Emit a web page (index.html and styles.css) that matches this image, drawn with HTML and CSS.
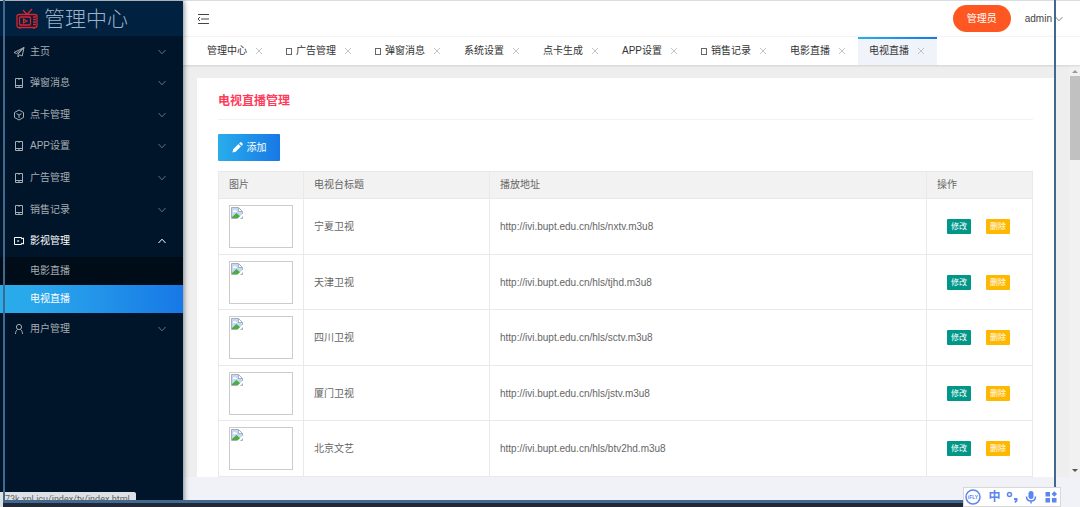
FILE: index.html
```html
<!DOCTYPE html>
<html lang="zh-CN">
<head>
<meta charset="utf-8">
<title>管理中心</title>
<link rel="stylesheet" href="styles.css">
</head>
<body>
<svg class="defs" aria-hidden="true">
  <symbol id="down" viewBox="0 0 10 10"><path d="M1.500 3 5 6.800 8.500 3"/></symbol>
  <symbol id="up" viewBox="0 0 10 10"><path d="M1.500 7 5 3.200 8.500 7"/></symbol>
  <symbol id="cross" viewBox="0 0 8 8"><path d="M1 1 7 7M7 1 1 7"/></symbol>
  <symbol id="phone" viewBox="0 0 12 12"><path d="M2.500 1.500h7v9h-7zM2.500 8.500h7M5 10h2M5 2h2"/></symbol>
  <symbol id="plane" viewBox="0 0 12 12"><path d="M11 1.500 1 6.500l2.600 1L11 1.500 5 8v3l1.600-2.200L9.200 10z"/></symbol>
  <symbol id="cube" viewBox="0 0 12 12"><path d="M6 1 10.500 3.500v5L6 11 1.500 8.500v-5zM3.500 4.700 6 6l2.500-1.300M6 6v3"/></symbol>
  <symbol id="video" viewBox="0 0 12 12"><path d="M1.500 2.500h7v1.300l2-.8v6l-2-.8v1.300h-7z"/><path d="M4.500 4.800v2.400L6.500 6z" fill="currentColor" stroke="none"/></symbol>
  <symbol id="user" viewBox="0 0 12 12"><circle cx="6" cy="4" r="2.600"/><path d="M4.700 6.300C3.200 7.300 2.500 9 2.500 11M7.300 6.300c1.500 1 2.200 2.700 2.200 4.700"/></symbol>
  <symbol id="broken" viewBox="0 0 14 14">
    <path d="M1.500 1.500h7l4 4v7h-11z" fill="#c3d9f7" stroke="#a9afb8"/>
    <path d="M8.500 1.500v4h4z" fill="#fff" stroke="#a9afb8"/>
    <path d="M3 6a1.500 1.500 0 0 1 2.500-1.500A1.300 1.300 0 0 1 7 6z" fill="#fff" stroke="none"/>
    <path d="M2 12v-1l4.500-4L11 11v1z" fill="#4caf3c" stroke="none"/>
    <path d="M6 14 14 6.500v2.500L9 14z" fill="#fff" stroke="none"/>
  </symbol>
</svg>
<div class="app">
  <aside class="sidebar">
    <div class="logo">
      <svg class="logo-icon" viewBox="0 0 22 22"><path d="M7 2l4 4.500L16 1M3 6.500h16q2 0 2 2v9q0 2-2 2H3q-2 0-2-2v-9q0-2 2-2zM4.500 9h9q1 0 1 1v6q0 1-1 1h-9q-1 0-1-1v-6q0-1 1-1zM17 9h3M17 11.500h3M17 14h3M17 16.500h3M4 19.500v1.500M18 19.500v1.500M7.500 11v4l3.500-2z"/></svg>
      <span>管理中心</span>
    </div>
    <nav>
      <div class="menu">
        <button class="item"><svg><use href="#plane"/></svg><span>主页</span><svg class="arrow"><use href="#down"/></svg></button>
        <button class="item"><svg><use href="#phone"/></svg><span>弹窗消息</span><svg class="arrow"><use href="#down"/></svg></button>
        <button class="item"><svg><use href="#cube"/></svg><span>点卡管理</span><svg class="arrow"><use href="#down"/></svg></button>
        <button class="item"><svg><use href="#phone"/></svg><span>APP设置</span><svg class="arrow"><use href="#down"/></svg></button>
        <button class="item"><svg><use href="#phone"/></svg><span>广告管理</span><svg class="arrow"><use href="#down"/></svg></button>
        <button class="item"><svg><use href="#phone"/></svg><span>销售记录</span><svg class="arrow"><use href="#down"/></svg></button>
        <button class="item open"><svg><use href="#video"/></svg><span>影视管理</span><svg class="arrow"><use href="#up"/></svg></button>
      </div>
      <div class="submenu">
        <a href="#">电影直播</a>
        <a href="#" class="current">电视直播</a>
      </div>
      <button class="item"><svg><use href="#user"/></svg><span>用户管理</span><svg class="arrow"><use href="#down"/></svg></button>
    </nav>
  </aside>
  <main class="main">
    <header class="topbar">
      <button class="fold" aria-label="折叠菜单"><svg viewBox="0 0 12 12"><path d="M1 1.500h11M4 6h8M1 10.500h11M3 4 1 6l2 2"/></svg></button>
      <div class="account">
        <button class="role">管理员</button>
        <button class="name">admin<svg><use href="#down"/></svg></button>
      </div>
    </header>
    <div class="tabs">
      <div class="tab"><a href="#">管理中心</a><button aria-label="关闭"><svg><use href="#cross"/></svg></button></div>
      <div class="tab"><i class="glyph"></i><a href="#">广告管理</a><button aria-label="关闭"><svg><use href="#cross"/></svg></button></div>
      <div class="tab"><i class="glyph"></i><a href="#">弹窗消息</a><button aria-label="关闭"><svg><use href="#cross"/></svg></button></div>
      <div class="tab"><a href="#">系统设置</a><button aria-label="关闭"><svg><use href="#cross"/></svg></button></div>
      <div class="tab"><a href="#">点卡生成</a><button aria-label="关闭"><svg><use href="#cross"/></svg></button></div>
      <div class="tab"><a href="#">APP设置</a><button aria-label="关闭"><svg><use href="#cross"/></svg></button></div>
      <div class="tab"><i class="glyph"></i><a href="#">销售记录</a><button aria-label="关闭"><svg><use href="#cross"/></svg></button></div>
      <div class="tab"><a href="#">电影直播</a><button aria-label="关闭"><svg><use href="#cross"/></svg></button></div>
      <div class="tab active"><a href="#">电视直播</a><button aria-label="关闭"><svg><use href="#cross"/></svg></button></div>
    </div>
    <div class="body">
      <div class="view">
        <section class="card">
          <h1>电视直播管理</h1>
          <button class="add"><svg viewBox="0 0 12 12"><path d="M.5 11.500 1.300 8 7 2.300 9.700 5 4 10.700zM7.800 1.500 9 .4q.6-.5 1.200 0l1.400 1.400q.5.6 0 1.200L10.500 4.200z"/></svg>添加</button>
          <table>
            <colgroup><col class="c-pic"><col class="c-title"><col><col class="c-act"></colgroup>
            <thead><tr><th>图片</th><th>电视台标题</th><th>播放地址</th><th>操作</th></tr></thead>
            <tbody>
              <tr><td><div class="thumb"><svg><use href="#broken"/></svg></div></td><td>宁夏卫视</td><td>http://ivi.bupt.edu.cn/hls/nxtv.m3u8</td><td><div class="acts"><button class="edit">修改</button><button class="del">删除</button></div></td></tr>
              <tr><td><div class="thumb"><svg><use href="#broken"/></svg></div></td><td>天津卫视</td><td>http://ivi.bupt.edu.cn/hls/tjhd.m3u8</td><td><div class="acts"><button class="edit">修改</button><button class="del">删除</button></div></td></tr>
              <tr><td><div class="thumb"><svg><use href="#broken"/></svg></div></td><td>四川卫视</td><td>http://ivi.bupt.edu.cn/hls/sctv.m3u8</td><td><div class="acts"><button class="edit">修改</button><button class="del">删除</button></div></td></tr>
              <tr><td><div class="thumb"><svg><use href="#broken"/></svg></div></td><td>厦门卫视</td><td>http://ivi.bupt.edu.cn/hls/jstv.m3u8</td><td><div class="acts"><button class="edit">修改</button><button class="del">删除</button></div></td></tr>
              <tr><td><div class="thumb"><svg><use href="#broken"/></svg></div></td><td>北京文艺</td><td>http://ivi.bupt.edu.cn/hls/btv2hd.m3u8</td><td><div class="acts"><button class="edit">修改</button><button class="del">删除</button></div></td></tr>
            </tbody>
          </table>
        </section>
      </div>
      <div class="scroll" aria-hidden="true"><i class="tri up"></i><i class="bar"></i><i class="tri down"></i></div>
    </div>
    <footer class="foot"></footer>
  </main>
</div>
<div class="status">73k.xpl.icu/index/tv/index.html</div>
<div class="taskbar"></div>
<div class="frame"></div>
<div class="ime">
  <svg viewBox="0 0 16 16"><circle cx="8" cy="8" r="7"/><text x="8" y="10" text-anchor="middle" class="brand">iFLY</text></svg>
  <span>中</span>
  <svg viewBox="0 0 16 16"><circle cx="5.500" cy="5.500" r="2"/><path d="M10 10h2.500v1.500L11 13.500" class="thick"/></svg>
  <svg viewBox="0 0 16 16"><rect x="5.500" y="2" width="5" height="8" rx="2.500" class="fill"/><path d="M3.500 7.500q0 4.500 4.500 4.500t4.500-4.500M8 12v2.500"/></svg>
  <svg viewBox="0 0 16 16"><path class="fill" d="M2.500 3h4.500v4.500H2.500zM2.500 9h4.500v4.500H2.500zM9 9h4.500v4.500H9zM11.300 2.300 14 5l-2.700 2.700L8.600 5z"/></svg>
</div>
</body>
</html>
```
FILE: styles.css
```css
* { box-sizing: border-box; }
body {
  margin: 0;
  height: 100vh;
  overflow: hidden;
  position: relative;
  font: 10px/16px "Liberation Sans", "Noto Sans CJK SC", sans-serif;
  color: #666;
  background: #f0f2f7;
}
button { font: inherit; color: inherit; background: none; border: 0; padding: 0; }
a { color: inherit; text-decoration: none; }
svg { fill: none; stroke: currentColor; flex: none; }
.defs { position: absolute; width: 0; height: 0; }

.app { display: flex; height: 100%; border-top: 1px solid #d9dce0; }

.sidebar {
  width: 183px;
  flex: none;
  background: #001529;
  color: #a6adb4;
  box-shadow: 1px 0 5px rgba(0, 21, 41, .5);
  z-index: 1;
}
.logo {
  display: flex;
  align-items: center;
  gap: 6px;
  height: 35px;
  padding-left: 16px;
  background: #002140;
  color: #9db2c8;
  font-size: 21px;
  font-weight: 300;
  line-height: 35px;
}
.logo-icon { width: 22px; height: 22px; color: #d9262e; stroke-width: 1.300; }
.menu { display: grid; grid-auto-rows: 1fr; height: 221px; }
.item {
  display: flex;
  align-items: center;
  width: 100%;
  min-height: 31px;
  padding: 0 16px 0 13px;
  text-align: left;
}
.item svg { width: 12px; height: 12px; margin-right: 5px; stroke-width: 1; }
.item span { flex: 1; }
.item .arrow { width: 10px; height: 10px; margin: 0; color: #66727e; }
.item.open, .item.open .arrow { color: #fff; }
.submenu { background: #000c17; }
.submenu a { display: block; padding-left: 30px; line-height: 28px; }
.submenu .current { color: #fff; background: linear-gradient(90deg, #29adeb, #29a5eb 25%, #1778e6); }

.main { flex: 1; min-width: 0; display: flex; flex-direction: column; }
.topbar {
  display: flex;
  align-items: center;
  justify-content: space-between;
  height: 35px;
  padding: 0 16px 0 14px;
  background: #fff;
}
.fold svg { display: block; width: 12px; height: 12px; color: #444; }
.account { display: flex; align-items: center; gap: 14px; }
.role { width: 58px; height: 27px; border-radius: 14px; background: #ff5722; color: #fff; }
.name { display: flex; align-items: center; gap: 2px; color: #444; }
.name svg { width: 10px; height: 10px; color: #888; }
.tabs {
  display: flex;
  height: 29px;
  flex: none;
  padding-left: 13px;
  background: #fff;
  border-top: 1px solid #f3f3f3;
  box-shadow: 0 1px 2px rgba(0, 0, 0, .12);
  z-index: 0;
}
.tab { display: flex; align-items: center; padding: 0 12px 0 11px; color: #333; white-space: nowrap; }
.tab button { margin-left: 8px; color: #c4c4c4; }
.tab svg { display: block; width: 8px; height: 8px; }
.glyph { width: 6px; height: 7px; margin-right: 4px; border: 1px solid #666; }
.tab.active { background: linear-gradient(90deg, #29adeb, #1778e6) top / 100% 2px no-repeat #f0f4fa; }

.body { flex: 1; min-height: 0; display: flex; background: #eee; }
.view { flex: 1; min-width: 0; overflow: hidden; padding: 13px 14px 0; }
.card { padding: 13px 22px 0 21px; background: #fff; }
h1 {
  margin: 0 0 14px;
  padding-bottom: 8px;
  border-bottom: 1px solid #f2f2f2;
  color: #ff3b5c;
  font-size: 12px;
  line-height: 20px;
}
.add {
  display: flex;
  align-items: center;
  justify-content: center;
  gap: 4px;
  width: 62px;
  height: 27px;
  margin-bottom: 10px;
  border-radius: 1px;
  background: linear-gradient(90deg, #29adeb, #1778e6);
  color: #fff;
}
.add svg { width: 11px; height: 11px; fill: currentColor; stroke: none; }
table { width: 100%; table-layout: fixed; border-collapse: collapse; }
.c-pic { width: 85px; }
.c-title { width: 186px; }
.c-act { width: 106px; }
th, td { border: 1px solid #e9e9e9; padding: 6px 10px; text-align: left; font-weight: 400; }
th { padding: 5px 10px; background: #f2f2f2; }
tbody tr:nth-child(even) td { padding-bottom: 5px; }
.thumb { width: 64px; height: 43px; border: 1px solid #ccc; }
.thumb svg { display: block; width: 14px; height: 14px; }
.acts { display: flex; gap: 15px; padding-left: 10px; }
.acts button { width: 24px; height: 15px; border-radius: 1px; color: #fff; font-size: 8px; line-height: 15px; }
.edit { background: #009688; }
.del { background: #ffb800; }

.scroll { width: 11px; display: flex; flex-direction: column; align-items: center; background: #f1f1f1; }
.bar { width: 10px; height: 84px; background: #c1c1c1; }
.tri { border: 3px solid transparent; }
.tri.up { border-top: 0; border-bottom-color: #999; margin: 5px 0 3px; }
.tri.down { border-bottom: 0; border-top-color: #555; margin: auto 0 5px; }
.foot { height: 30px; flex: none; }

.status {
  position: absolute;
  left: 0;
  bottom: 0;
  min-width: 136px;
  padding-left: 5px;
  background: #dee1e4;
  border-radius: 0 2px 0 0;
  color: #5f6368;
  font: 9px/15px Roboto, sans-serif;
  z-index: 2;
}
.taskbar { position: absolute; left: 3px; right: 24px; bottom: 0; height: 5px; background: #222835; z-index: 2; }
.frame {
  position: absolute;
  inset: 0 24px 4px 3px;
  border: solid #41688f;
  border-width: 0 2px 3px;
  pointer-events: none;
  z-index: 3;
}
.ime {
  position: absolute;
  right: 19px;
  bottom: 0;
  display: flex;
  align-items: center;
  justify-content: space-between;
  width: 98px;
  height: 20px;
  padding: 0 1px;
  background: #fff;
  border: 1px solid #d8d8d8;
  color: #5b86f0;
  z-index: 4;
}
.ime svg { width: 16px; height: 16px; stroke-width: 1.500; }
.ime span { padding-left: 4px; font-size: 12px; font-weight: 700; }
.ime .fill { fill: currentColor; stroke: none; }
.ime .thick { stroke-width: 2; }
.ime .brand { font-size: 5px; font-weight: 700; fill: currentColor; stroke: none; }
```
